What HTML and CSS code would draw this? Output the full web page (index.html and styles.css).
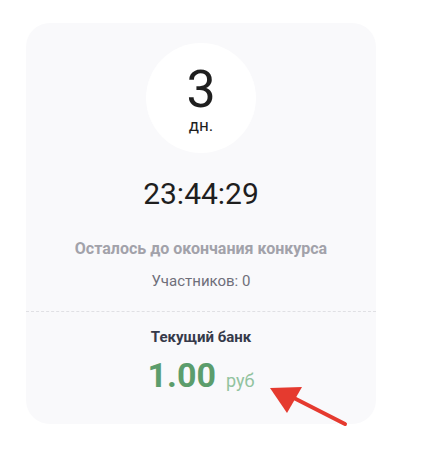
FILE: index.html
```html
<!DOCTYPE html>
<html lang="ru">
<head>
<meta charset="utf-8">
<title>Конкурс</title>
<link rel="stylesheet" href="styles.css">
</head>
<body>
<div class="page">
  <div class="card">
    <div class="days">
      <div class="days-num">3</div>
      <div class="days-label">дн.</div>
    </div>
    <div class="time">23:44:29</div>
    <div class="remain">Осталось до окончания конкурса</div>
    <div class="members">Участников: 0</div>
    <div class="bank">
      <div class="bank-title">Текущий банк</div>
      <div class="bank-sum"><span class="bank-value">1.00</span><span class="bank-cur">руб</span></div>
    </div>
  </div>
  <svg class="arrow" width="90" height="60" viewBox="0 0 90 60">
    <line x1="20" y1="14" x2="75" y2="42" stroke="#e53a2f" stroke-width="4" stroke-linecap="round"/>
    <polygon points="0,6 32,5 17,31" fill="#e53a2f"/>
  </svg>
</div>
</body>
</html>
```

FILE: styles.css
```css
* { box-sizing: border-box; }
html, body {
  margin: 0;
  padding: 0;
  background: #ffffff;
}
body {
  font-family: Roboto, "Liberation Sans", Arial, sans-serif;
}
.page {
  position: relative;
  width: 432px;
  height: 464px;
  padding: 23px 0 0 26px;
}
.card {
  width: 350px;
  height: 401px;
  background: #f9f9fb;
  border-radius: 24px;
  padding-top: 20px;
  display: flex;
  flex-direction: column;
  align-items: center;
}
.days {
  width: 110px;
  height: 110px;
  border-radius: 50%;
  background: #ffffff;
  padding-top: 5px;
  display: flex;
  flex-direction: column;
  align-items: center;
  justify-content: center;
}
.days-num {
  font-size: 52px;
  line-height: 46px;
  color: #1f1f1f;
}
.days-label {
  font-size: 17px;
  line-height: 18px;
  margin-top: 3px;
  color: #1f1f1f;
}
.time {
  margin-top: 26px;
  font-size: 30px;
  line-height: 30px;
  color: #1f1f1f;
}
.remain {
  margin-top: 32px;
  font-size: 16px;
  line-height: 16px;
  font-weight: 700;
  color: #a2a2aa;
}
.members {
  margin-top: 17px;
  font-size: 15px;
  line-height: 15px;
  color: #6f6f7a;
}
.bank {
  margin-top: 22px;
  width: 100%;
  border-top: 1.5px dashed #e0e0e4;
  display: flex;
  flex-direction: column;
  align-items: center;
}
.bank-title {
  margin-top: 18px;
  font-size: 15px;
  line-height: 15px;
  font-weight: 700;
  color: #363a4a;
}
.bank-sum {
  margin-top: 13px;
  display: flex;
  align-items: baseline;
  gap: 10px;
}
.bank-value {
  font-size: 34px;
  line-height: 34px;
  font-weight: 700;
  color: #5c9d6c;
}
.bank-cur {
  font-size: 18px;
  line-height: 18px;
  color: #92c39f;
}
.arrow {
  position: absolute;
  left: 270px;
  top: 382px;
}
```
